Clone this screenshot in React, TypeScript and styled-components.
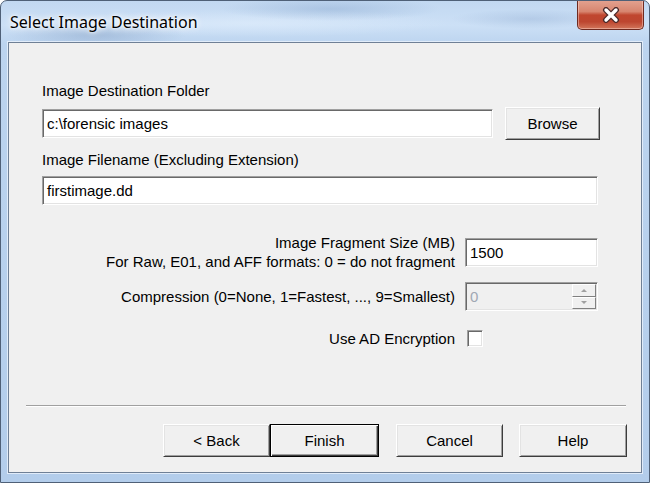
import React from "react";
import styled, { createGlobalStyle } from "styled-components";

const Global = createGlobalStyle`
  html, body { margin: 0; padding: 0; background: #ffffff; }
  body { font-family: "Liberation Sans", Arial, sans-serif; }
  * { box-sizing: border-box; }
`;

const Window = styled.div`
  width: 650px;
  height: 483px;
  display: flex;
  flex-direction: column;
  border: 1px solid #4f6077;
  border-radius: 7px 7px 0 0;
  overflow: hidden;
  background:
    radial-gradient(ellipse 90px 14px at 95px 34px, rgba(110, 140, 180, 0.35), transparent),
    radial-gradient(ellipse 110px 12px at 330px 8px, rgba(110, 145, 190, 0.3), transparent),
    radial-gradient(ellipse 80px 10px at 530px 18px, rgba(130, 160, 200, 0.3), transparent),
    radial-gradient(ellipse 200px 14px at 250px 22px, rgba(225, 238, 252, 0.6), transparent),
    linear-gradient(180deg, #c2d8f1 0%, #cce0f6 5%, #bcd4ef 9%, #b3cdeb 100%);
`;

const TitleBar = styled.div`
  height: 41px;
  flex: none;
  display: flex;
  align-items: flex-start;
  justify-content: space-between;
  padding-left: 9px;
`;

const Title = styled.div`
  margin-top: 11px;
  font-family: "Noto Sans", "Liberation Sans", sans-serif;
  font-size: 16px;
  line-height: 20px;
  color: #000;
  text-shadow: 0 0 6px #ffffff, 0 0 3px #ffffff, 0 0 10px rgba(255, 255, 255, 0.9);
`;

const CloseButton = styled.div`
  width: 67px;
  height: 30px;
  margin-top: -1px;
  margin-right: 5px;
  display: flex;
  align-items: center;
  justify-content: center;
  border: 1px solid #6e2a20;
  border-top: none;
  border-radius: 0 0 5px 5px;
  background: linear-gradient(180deg, #e3a391 0%, #d7856f 40%, #c0462f 52%, #bd4630 75%, #d2765b 100%);
  box-shadow: inset 0 0 0 1px rgba(255, 220, 210, 0.45);
`;

const Client = styled.div`
  flex: 1;
  margin: 0 7px 9px 7px;
  display: flex;
  flex-direction: column;
  background: #f0f0f0;
  border: 1px solid #6f8096;
  box-shadow: 0 0 0 1px rgba(235, 243, 252, 0.8);
`;

const Form = styled.div`
  display: flex;
  flex-direction: column;
  padding: 39px 43px 0 33px;
`;

const Label = styled.div<{ $top?: number }>`
  font-size: 15px;
  line-height: 18px;
  color: #000;
  margin-top: ${(p) => p.$top ?? 0}px;
`;

const Row = styled.div<{ $top?: number }>`
  display: flex;
  align-items: center;
  gap: 12px;
  margin-top: ${(p) => p.$top ?? 0}px;
`;

const TextBox = styled.div<{ $disabled?: boolean; $width?: number }>`
  height: 29px;
  ${(p) => (p.$width ? `width: ${p.$width}px; flex: none;` : "flex: 1;")}
  display: flex;
  align-items: center;
  padding-left: 4px;
  font-size: 15px;
  color: ${(p) => (p.$disabled ? "#a0a8b4" : "#000")};
  background: ${(p) => (p.$disabled ? "#f0f0f0" : "#ffffff")};
  border: 1px solid;
  border-color: #a0a0a0 #ffffff #ffffff #a0a0a0;
  box-shadow: inset 1px 1px 0 #696969, inset -1px -1px 0 #e3e3e3;
  position: relative;
`;

const Button = styled.div<{ $default?: boolean; $width?: number; $after?: number }>`
  width: ${(p) => p.$width ?? 108}px;
  height: 33px;
  flex: none;
  display: flex;
  align-items: center;
  justify-content: center;
  font-size: 15px;
  color: #000;
  background: #f0f0f0;
  margin-right: ${(p) => p.$after ?? 0}px;
  border: 1px solid;
  border-color: ${(p) => (p.$default ? "#000" : "#ffffff #3c3c3c #3c3c3c #ffffff")};
  box-shadow: ${(p) =>
    p.$default
      ? "inset 1px 1px 0 #ffffff, inset -1px -1px 0 #3c3c3c, inset -2px -2px 0 #a0a0a0"
      : "inset 1px 1px 0 #e3e3e3, inset -1px -1px 0 #a0a0a0"};
`;

const FieldRow = styled.div<{ $top: number }>`
  display: grid;
  grid-template-columns: 1fr 133px;
  column-gap: 10px;
  align-items: center;
  margin-top: ${(p) => p.$top}px;
`;

const RightLabel = styled.div`
  text-align: right;
  font-size: 15px;
  line-height: 19px;
  color: #000;
`;

const SpinButtons = styled.div`
  position: absolute;
  top: 1px;
  right: 1px;
  bottom: 1px;
  width: 24px;
  display: flex;
  flex-direction: column;
`;

const SpinPart = styled.div<{ $down?: boolean }>`
  flex: 1;
  display: flex;
  align-items: center;
  justify-content: center;
  background: #f0f0f0;
  border: 1px solid;
  border-color: #ffffff #808080 #808080 #ffffff;
  &::after {
    content: "";
    width: 0;
    height: 0;
    border-left: 3px solid transparent;
    border-right: 3px solid transparent;
    ${(p) =>
      p.$down ? "border-top: 3px solid #a0a0a0;" : "border-bottom: 3px solid #a0a0a0;"}
  }
`;

const CheckBox = styled.div`
  width: 16px;
  height: 17px;
  background: #ffffff;
  border: 1px solid;
  border-color: #a0a0a0 #ffffff #ffffff #a0a0a0;
  box-shadow: inset 1px 1px 0 #696969, inset -1px -1px 0 #e3e3e3;
  margin-left: 2px;
`;

const Spacer = styled.div`
  flex: 1;
`;

const Separator = styled.div`
  height: 2px;
  margin: 0 15px 0 17px;
  border-top: 1px solid #a0a0a0;
  border-bottom: 1px solid #ffffff;
`;

const Footer = styled.div`
  display: flex;
  justify-content: flex-end;
  padding: 17px 14px 15px 0;
`;

const CloseIcon = () => (
  <svg width="18" height="16" viewBox="0 0 18 16">
    <path d="M4 3 L14 13 M14 3 L4 13" stroke="#4b2a2a" strokeWidth="6" strokeLinecap="round" />
    <path d="M4 3 L14 13 M14 3 L4 13" stroke="#ffffff" strokeWidth="3.4" strokeLinecap="round" />
  </svg>
);

export default function App() {
  return (
    <>
      <Global />
      <Window>
        <TitleBar>
          <Title>Select Image Destination</Title>
          <CloseButton>
            <CloseIcon />
          </CloseButton>
        </TitleBar>
        <Client>
          <Form>
            <Label>Image Destination Folder</Label>
            <Row $top={7}>
              <TextBox>c:\forensic images</TextBox>
              <Button $width={95} style={{ marginRight: -2 }}>Browse</Button>
            </Row>
            <Label $top={11}>Image Filename (Excluding Extension)</Label>
            <Row $top={7}>
              <TextBox>firstimage.dd</TextBox>
            </Row>
            <FieldRow $top={28}>
              <RightLabel>
                Image Fragment Size (MB)
                <br />
                For Raw, E01, and AFF formats: 0 = do not fragment
              </RightLabel>
              <TextBox>1500</TextBox>
            </FieldRow>
            <FieldRow $top={11}>
              <RightLabel>Compression (0=None, 1=Fastest, ..., 9=Smallest)</RightLabel>
              <TextBox $disabled>
                0
                <SpinButtons>
                  <SpinPart />
                  <SpinPart $down />
                </SpinButtons>
              </TextBox>
            </FieldRow>
            <FieldRow $top={18}>
              <RightLabel>Use AD Encryption</RightLabel>
              <CheckBox />
            </FieldRow>
          </Form>
          <Spacer />
          <Separator />
          <Footer>
            <Button $width={107}>&lt; Back</Button>
            <Button $default $width={109} $after={17}>Finish</Button>
            <Button $width={107} $after={16}>Cancel</Button>
            <Button $width={108}>Help</Button>
          </Footer>
        </Client>
      </Window>
    </>
  );
}
